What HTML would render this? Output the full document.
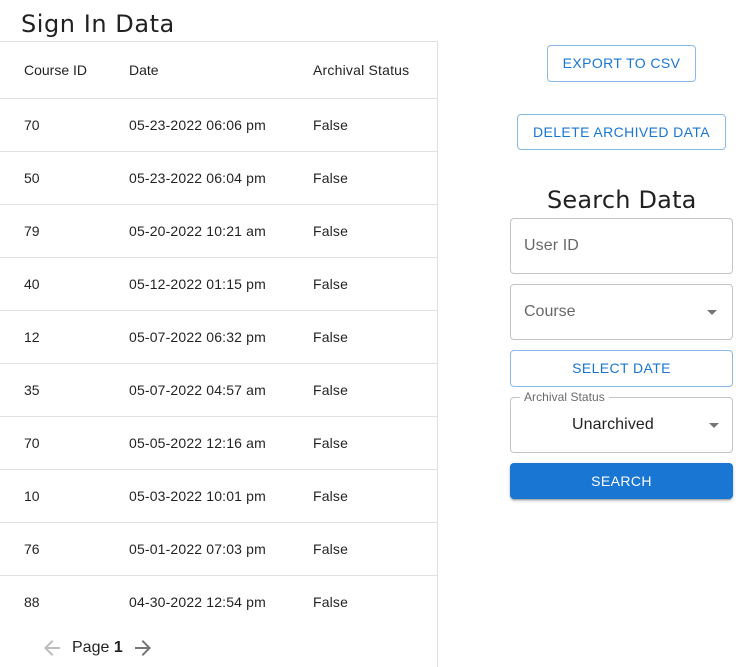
<!DOCTYPE html>
<html><head><meta charset="utf-8"><style>
html,body{margin:0;padding:0;background:#fff;width:748px;height:667px;overflow:hidden}
body{position:relative;font-family:"Liberation Sans",sans-serif;color:rgba(0,0,0,.87)}
.a{position:absolute;white-space:nowrap}
.h{font-family:"DejaVu Sans",sans-serif;font-size:24px;line-height:28px;color:rgba(0,0,0,.87)}
.l{position:absolute;left:0;width:437px;height:1px;background:#e0e0e0}
.c{position:absolute;font-size:14px;line-height:20px;white-space:nowrap}
.d{letter-spacing:.16px}
.b{position:absolute;box-sizing:border-box;border:1px solid rgba(25,118,210,.5);border-radius:4px;color:#1976d2;font-size:14px;letter-spacing:.4px;text-align:center;white-space:nowrap}
.f{position:absolute;box-sizing:border-box;border:1px solid #c4c4c4;border-radius:4px;left:510px;width:223px}
.t{position:absolute;font-size:16px;line-height:20px;color:rgba(0,0,0,.6);white-space:nowrap}
</style></head><body>
<div class="a h" style="left:21px;top:10px;letter-spacing:.55px">Sign In Data</div>
<div class="l" style="top:41px"></div>
<div class="a" style="left:437px;top:41px;width:1px;height:626px;background:#e0e0e0"></div>
<div class="c" style="left:24px;top:60px">Course ID</div><div class="c" style="left:129px;top:60px">Date</div><div class="c d" style="left:313px;top:60px;letter-spacing:.2px">Archival Status</div>
<div class="l" style="top:98px"></div>
<div class="c" style="left:24px;top:115px">70</div><div class="c d" style="left:129px;top:115px">05-23-2022 06:06 pm</div><div class="c d" style="left:313px;top:115px">False</div>
<div class="l" style="top:151px"></div>
<div class="c" style="left:24px;top:168px">50</div><div class="c d" style="left:129px;top:168px">05-23-2022 06:04 pm</div><div class="c d" style="left:313px;top:168px">False</div>
<div class="l" style="top:204px"></div>
<div class="c" style="left:24px;top:221px">79</div><div class="c d" style="left:129px;top:221px">05-20-2022 10:21 am</div><div class="c d" style="left:313px;top:221px">False</div>
<div class="l" style="top:257px"></div>
<div class="c" style="left:24px;top:274px">40</div><div class="c d" style="left:129px;top:274px">05-12-2022 01:15 pm</div><div class="c d" style="left:313px;top:274px">False</div>
<div class="l" style="top:310px"></div>
<div class="c" style="left:24px;top:327px">12</div><div class="c d" style="left:129px;top:327px">05-07-2022 06:32 pm</div><div class="c d" style="left:313px;top:327px">False</div>
<div class="l" style="top:363px"></div>
<div class="c" style="left:24px;top:380px">35</div><div class="c d" style="left:129px;top:380px">05-07-2022 04:57 am</div><div class="c d" style="left:313px;top:380px">False</div>
<div class="l" style="top:416px"></div>
<div class="c" style="left:24px;top:433px">70</div><div class="c d" style="left:129px;top:433px">05-05-2022 12:16 am</div><div class="c d" style="left:313px;top:433px">False</div>
<div class="l" style="top:469px"></div>
<div class="c" style="left:24px;top:486px">10</div><div class="c d" style="left:129px;top:486px">05-03-2022 10:01 pm</div><div class="c d" style="left:313px;top:486px">False</div>
<div class="l" style="top:522px"></div>
<div class="c" style="left:24px;top:539px">76</div><div class="c d" style="left:129px;top:539px">05-01-2022 07:03 pm</div><div class="c d" style="left:313px;top:539px">False</div>
<div class="l" style="top:575px"></div>
<div class="c" style="left:24px;top:592px">88</div><div class="c d" style="left:129px;top:592px">04-30-2022 12:54 pm</div><div class="c d" style="left:313px;top:592px">False</div>
<svg class="a" style="left:40px;top:636px" width="24" height="24" viewBox="0 0 24 24"><path fill="rgba(0,0,0,.26)" d="M20 11H7.83l5.59-5.59L12 4l-8 8 8 8 1.41-1.41L7.83 13H20v-2z"/></svg>
<div class="a" style="left:72px;top:638px;font-size:16px;line-height:20px">Page <b>1</b></div>
<svg class="a" style="left:131px;top:636px" width="24" height="24" viewBox="0 0 24 24"><path fill="rgba(0,0,0,.54)" d="M12 4l-1.41 1.41L16.17 11H4v2h12.17l-5.58 5.59L12 20l8-8z"/></svg>
<div class="b" style="left:547px;top:45px;width:149px;height:37px;line-height:35px">EXPORT TO CSV</div>
<div class="b" style="left:517px;top:114px;width:209px;height:36px;line-height:34px">DELETE ARCHIVED DATA</div>
<div class="a h" style="left:547px;top:186px;letter-spacing:.2px">Search Data</div>
<div class="f" style="top:218px;height:56px"></div>
<div class="t" style="left:524px;top:236px;letter-spacing:.1px">User ID</div>
<div class="f" style="top:284px;height:56px"></div>
<div class="t" style="left:524px;top:302px">Course</div>
<svg class="a" style="left:700px;top:300px" width="24" height="24" viewBox="0 0 24 24"><path fill="rgba(0,0,0,.54)" d="M7 10l5 5 5-5z"/></svg>
<div class="b" style="left:510px;top:350px;width:223px;height:37px;line-height:35px">SELECT DATE</div>
<div class="f" style="top:397px;height:56px"></div>
<div class="a" style="left:520px;top:390px;background:#fff;padding:0 4px;font-size:12px;line-height:14px;color:rgba(0,0,0,.6);letter-spacing:.05px">Archival Status</div>
<div class="a" style="left:572px;top:415px;font-size:16px;line-height:20px;letter-spacing:.1px">Unarchived</div>
<svg class="a" style="left:702px;top:413px" width="24" height="24" viewBox="0 0 24 24"><path fill="rgba(0,0,0,.54)" d="M7 10l5 5 5-5z"/></svg>
<div class="a" style="left:510px;top:463px;width:223px;height:36px;line-height:36px;background:#1976d2;color:#fff;border-radius:4px;font-size:14px;letter-spacing:.4px;text-align:center;box-shadow:0 3px 1px -2px rgba(0,0,0,.2),0 2px 2px 0 rgba(0,0,0,.14),0 1px 5px 0 rgba(0,0,0,.12)">SEARCH</div>
</body></html>
